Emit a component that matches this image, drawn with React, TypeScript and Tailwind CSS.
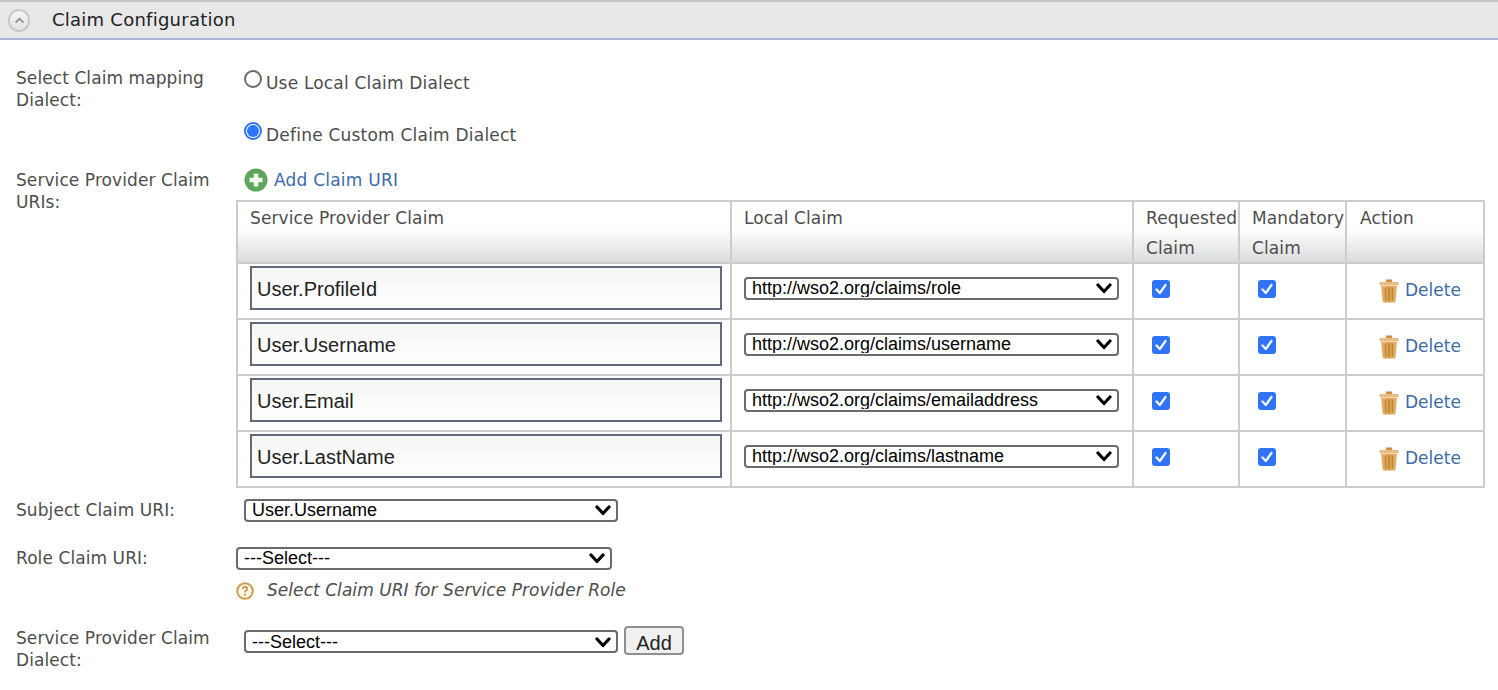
import { ReactNode } from "react";

const claims = [
  { name: "User.ProfileId", local: "http://wso2.org/claims/role" },
  { name: "User.Username", local: "http://wso2.org/claims/username" },
  { name: "User.Email", local: "http://wso2.org/claims/emailaddress" },
  { name: "User.LastName", local: "http://wso2.org/claims/lastname" },
];

function Dropdown({ value, className }: { value: string; className: string }) {
  return (
    <div className={`relative ${className}`}>
      <select
        defaultValue={value}
        className="block w-full h-full appearance-none bg-white border-2 border-[#6b6b6b] rounded-[4px] pl-[6px] pr-6 text-[18px] tracking-normal leading-none text-black font-['Liberation_Sans',sans-serif] outline-none"
      >
        <option>{value}</option>
      </select>
      <svg viewBox="0 0 16 11" className="absolute right-[7px] top-1/2 -mt-[5px] w-[16px] h-[11px] pointer-events-none">
        <path d="M2 2 L8 8.5 L14 2" fill="none" stroke="#000" strokeWidth="3.2" strokeLinecap="round" strokeLinejoin="round" />
      </svg>
    </div>
  );
}

function CheckMark() {
  return (
    <span className="inline-flex items-center justify-center w-[18px] h-[18px] rounded-[3px] bg-[#2f74f6]">
      <svg viewBox="0 0 18 18" className="w-[18px] h-[18px]">
        <path d="M4.5 9.5 L7.8 13 L13.5 5" fill="none" stroke="#fff" strokeWidth="2.2" strokeLinecap="round" strokeLinejoin="round" />
      </svg>
    </span>
  );
}

function TrashIcon() {
  return (
    <svg viewBox="0 0 20 24" className="w-[20px] h-[24px] shrink-0">
      <defs>
        <linearGradient id="trashBody" x1="0" y1="0" x2="1" y2="0">
          <stop offset="0" stopColor="#e9b56f" />
          <stop offset="0.5" stopColor="#d99a4c" />
          <stop offset="1" stopColor="#e6b26c" />
        </linearGradient>
      </defs>
      <path d="M7 0.5 H13 V3 H7 Z" fill="#c98f45" />
      <path d="M0.5 3 H19.5 V6.5 H0.5 Z" fill="#e8bd82" />
      <path d="M2 7 H18 L16.5 22 Q16.3 23.5 15 23.5 H5 Q3.7 23.5 3.5 22 Z" fill="url(#trashBody)" />
      <path d="M6.5 9 V21 M10 9 V21 M13.5 9 V21" stroke="#bd8237" strokeWidth="1.2" />
    </svg>
  );
}

function AddIcon() {
  return (
    <svg viewBox="0 0 24 24" className="w-[24px] h-[24px] shrink-0">
      <circle cx="12" cy="12" r="11.5" fill="#5fa55a" />
      <path d="M12 5.5 V18.5 M5.5 12 H18.5" stroke="#f2f7f0" strokeWidth="4.4" />
    </svg>
  );
}

function HelpIcon() {
  return (
    <svg viewBox="0 0 18 18" className="w-[18px] h-[18px] shrink-0">
      <circle cx="9" cy="9" r="7.8" fill="#fdf7e6" stroke="#c9a04f" strokeWidth="2" />
      <path d="M6.8 7 Q7 4.8 9.1 4.8 Q11.2 4.8 11.2 6.7 Q11.2 7.9 9.9 8.6 Q9 9.1 9 10.5" fill="none" stroke="#c8823a" strokeWidth="1.5" />
      <circle cx="9" cy="12.8" r="1" fill="#c8823a" />
    </svg>
  );
}

function Label({ children }: { children: ReactNode }) {
  return <div className="w-[228px] shrink-0 pl-4 leading-[22px] tracking-[0.08px] whitespace-nowrap">{children}</div>;
}

function HeadCell({ children, className }: { children: ReactNode; className: string }) {
  return (
    <th className={`border-2 border-[#cccccc] font-normal leading-[30px] tracking-[0.1px] whitespace-nowrap ${className}`}>
      <div className="h-[60px] pt-[1px]">{children}</div>
    </th>
  );
}

export default function App() {
  return (
    <div className="w-[1498px] h-[690px] overflow-hidden bg-white text-[#4d4d4d] text-[17px] tracking-[0.22px] font-['DejaVu_Sans',sans-serif]">
      <div className="h-10 flex items-center bg-[#e8e8e8] border-t-2 border-b-2 border-t-[#c4c4c4] border-b-[#a8b3d3] pl-[8px] text-[#222]">
        <span className="w-[22px] h-[23px] rounded-full border-2 border-[#c8c8c8] bg-gradient-to-b from-[#f6f6f6] to-[#e2e2e2] flex items-center justify-center">
          <svg viewBox="0 0 12 8" className="w-[11px] h-[7px]">
            <path d="M1.5 6.5 L6 2 L10.5 6.5" fill="none" stroke="#8a8a8a" strokeWidth="2" />
          </svg>
        </span>
        <span className="ml-[22px] mb-[2px] text-[18px] tracking-[0.25px]">Claim Configuration</span>
      </div>

      <div className="flex pt-[27px]">
        <Label>
          Select Claim mapping
          <br />
          Dialect:
        </Label>
        <div className="pl-4">
          <div className="flex items-start h-[52px]">
            <span className="w-[18px] h-[18px] mt-[3px] rounded-full border-2 border-[#6b6b6b] bg-white" />
            <span className="ml-[4px] mt-[4px] tracking-[0.18px]">Use Local Claim Dialect</span>
          </div>
          <div className="flex items-start h-[50px]">
            <span className="w-[18px] h-[18px] mt-[3px] rounded-full border-2 border-[#2f74f6] bg-white flex items-center justify-center">
              <span className="w-[12px] h-[12px] rounded-full bg-[#2f74f6]" />
            </span>
            <span className="ml-[4px] mt-[4px]">Define Custom Claim Dialect</span>
          </div>
        </div>
      </div>

      <div className="flex">
        <Label>
          Service Provider Claim
          <br />
          URIs:
        </Label>
        <div className="flex-1">
          <div className="flex items-center h-[24px] ml-[16px] -mt-[1px] text-[#3d6aa8] gap-[6px]">
            <AddIcon />
            <span className="pt-[2px]">Add Claim URI</span>
          </div>
          <table className="mt-[8px] ml-[8px] w-[1247px] table-fixed border-collapse">
            <colgroup>
              <col className="w-[494px]" />
              <col className="w-[402px]" />
              <col className="w-[106px]" />
              <col className="w-[107px]" />
              <col className="w-[138px]" />
            </colgroup>
            <thead>
              <tr className="h-[62px] bg-gradient-to-b from-white from-45% to-[#d9dadc] align-top text-left">
                <HeadCell className="px-3">Service Provider Claim</HeadCell>
                <HeadCell className="px-3">Local Claim</HeadCell>
                <HeadCell className="px-3">
                  Requested
                  <br />
                  Claim
                </HeadCell>
                <HeadCell className="px-3">
                  Mandatory
                  <br />
                  Claim
                </HeadCell>
                <HeadCell className="pl-[13px]">Action</HeadCell>
              </tr>
            </thead>
            <tbody>
              {claims.map((c) => (
                <tr key={c.name} className="h-[56px]">
                  <td className="border-2 border-[#cccccc] px-3 pb-[6px]">
                    <input
                      readOnly
                      defaultValue={c.name}
                      className="block w-[472px] h-[44px] border-2 border-[#5f6b7e] bg-gradient-to-b from-[#f6f6f6] to-white px-[5px] pt-[2px] text-[20px] tracking-normal text-[#222] font-['Liberation_Sans',sans-serif] outline-none"
                    />
                  </td>
                  <td className="border-2 border-[#cccccc] pl-3 pb-[6px]">
                    <Dropdown value={c.local} className="w-[375px] h-[23px]" />
                  </td>
                  <td className="border-2 border-[#cccccc] pl-[18px] pt-[4px]">
                    <CheckMark />
                  </td>
                  <td className="border-2 border-[#cccccc] pl-[18px] pt-[4px]">
                    <CheckMark />
                  </td>
                  <td className="border-2 border-[#cccccc] pl-[32px]">
                    <div className="flex items-center gap-[6px] text-[#3d6aa8] tracking-normal">
                      <TrashIcon />
                      <span>Delete</span>
                    </div>
                  </td>
                </tr>
              ))}
            </tbody>
          </table>
        </div>
      </div>

      <div className="flex items-center mt-[10px] h-[24px]">
        <Label>Subject Claim URI:</Label>
        <Dropdown value="User.Username" className="ml-4 w-[374px] h-[23px]" />
      </div>

      <div className="flex items-center mt-[24px] h-[24px]">
        <Label>Role Claim URI:</Label>
        <Dropdown value="---Select---" className="ml-2 w-[376px] h-[23px]" />
      </div>
      <div className="flex items-center mt-[9px] ml-[236px] h-[24px] italic gap-[13px] tracking-[0.05px]">
        <HelpIcon />
        <span>Select Claim URI for Service Provider Role</span>
      </div>

      <div className="flex mt-[24px]">
        <Label>
          Service Provider Claim
          <br />
          Dialect:
        </Label>
        <div className="flex items-start ml-4 -mt-[1px] gap-[6px]">
          <Dropdown value="---Select---" className="w-[374px] h-[23px] mt-[4px]" />
          <button className="w-[60px] h-[29px] rounded-[4px] border-2 border-[#8f8f8f] bg-[#f0f0f0] text-[20px] tracking-normal text-[#222] font-['Liberation_Sans',sans-serif]">
            Add
          </button>
        </div>
      </div>
    </div>
  );
}
